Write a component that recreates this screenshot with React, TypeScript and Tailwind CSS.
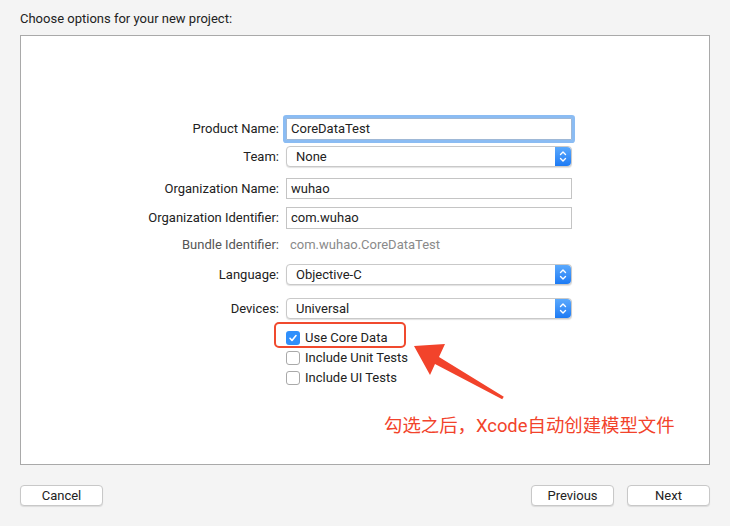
const Stepper = () => (
  <div className="absolute right-0 top-0 bottom-0 w-[16px] rounded-r-[4px] bg-gradient-to-b from-[#5aa9fd] to-[#1b7af4] flex items-center justify-center">
    <svg width="8" height="13" viewBox="0 0 8 13" fill="none" stroke="white" strokeWidth="1.4" strokeLinecap="round" strokeLinejoin="round">
      <path d="M1.5 4.5 L4 2 L6.5 4.5" />
      <path d="M1.5 8.5 L4 11 L6.5 8.5" />
    </svg>
  </div>
);

const Popup = ({ value }: { value: string }) => (
  <div className="relative w-[286px] h-full bg-white border border-[#c9c9c9] rounded-[4px] shadow-[0_1px_1px_rgba(0,0,0,0.12)] flex items-center pl-[9px] text-[13px] text-[#222]">
    {value}
    <Stepper />
  </div>
);

const Field = ({ value, focused }: { value: string; focused?: boolean }) => (
  <div
    className={
      focused
        ? "w-[286px] h-full bg-white border border-[#9fb8d6] ring-[3px] ring-[#8bbcf3] rounded-[1px] flex items-center pl-[4px] text-[13px] text-[#222]"
        : "w-[286px] h-full bg-white border border-[#c4c4c4] flex items-center pl-[4px] text-[13px] text-[#222]"
    }
  >
    {value}
  </div>
);

const Row = ({ label, className, children }: { label: string; className: string; children: React.ReactNode }) => (
  <div className={"flex items-center " + className}>
    <div className="w-[258px] text-right text-[13px] text-[#222]">{label}</div>
    <div className="ml-[7px] h-full flex items-center">{children}</div>
  </div>
);

const Check = ({ label, checked, className }: { label: string; checked?: boolean; className: string }) => (
  <div className={"flex items-center h-[20px] pl-[265px] " + className}>
    {checked ? (
      <div className="w-[14px] h-[14px] rounded-[3px] bg-[#2f8ffb] flex items-center justify-center">
        <svg width="10" height="10" viewBox="0 0 10 10" fill="none" stroke="white" strokeWidth="1.6" strokeLinecap="round" strokeLinejoin="round">
          <path d="M2 5.3 L4 7.5 L8 2.5" />
        </svg>
      </div>
    ) : (
      <div className="w-[14px] h-[14px] rounded-[3px] bg-white border border-[#a9a9a9]" />
    )}
    <span className="ml-[5px] text-[13px] text-[#222]">{label}</span>
  </div>
);

const App = () => {
  return (
    <div className="relative w-[730px] h-[526px] bg-[#f4f4f4] font-['Roboto','Noto_Sans_CJK_SC',sans-serif] overflow-hidden">
      <div className="pl-[20px] pt-[10px] h-[35px] text-[13px] text-[#222] leading-[18px]">Choose options for your new project:</div>

      <div className="mx-[20px] h-[430px] bg-white border border-[#a9a9a9] pt-[82px]">
        <Row label="Product Name:" className="h-[22px]">
          <Field value="CoreDataTest" focused />
        </Row>
        <Row label="Team:" className="h-[21px] mt-[6px]">
          <Popup value="None" />
        </Row>
        <Row label="Organization Name:" className="h-[21px] mt-[11px]">
          <Field value="wuhao" />
        </Row>
        <Row label="Organization Identifier:" className="h-[22px] mt-[8px]">
          <Field value="com.wuhao" />
        </Row>
        <div className="flex items-center h-[20px] mt-[6px] text-[13px]">
          <div className="w-[258px] text-right text-[#555]">Bundle Identifier:</div>
          <div className="ml-[11px] text-[#8a8a8a]">com.wuhao.CoreDataTest</div>
        </div>
        <Row label="Language:" className="h-[21px] mt-[9px]">
          <Popup value="Objective-C" />
        </Row>
        <Row label="Devices:" className="h-[21px] mt-[13px]">
          <Popup value="Universal" />
        </Row>
        <Check label="Use Core Data" checked className="mt-[9px]" />
        <Check label="Include Unit Tests" className="" />
        <Check label="Include UI Tests" className="" />
      </div>

      <div className="flex justify-between px-[20px] mt-[20px]">
        <button className="w-[83px] h-[21px] bg-white border border-[#c8c8c8] rounded-[4px] shadow-[0_1px_1px_rgba(0,0,0,0.1)] text-[13px] text-[#222]">Cancel</button>
        <div className="flex gap-[13px]">
          <button className="w-[83px] h-[21px] bg-white border border-[#c8c8c8] rounded-[4px] shadow-[0_1px_1px_rgba(0,0,0,0.1)] text-[13px] text-[#222]">Previous</button>
          <button className="w-[83px] h-[21px] bg-white border border-[#c8c8c8] rounded-[4px] shadow-[0_1px_1px_rgba(0,0,0,0.1)] text-[13px] text-[#222]">Next</button>
        </div>
      </div>

      {/* annotation */}
      <div className="absolute left-[274px] top-[322px] w-[132px] h-[26px] border-2 border-[#f04a2e] rounded-[5px]" />
      <svg className="absolute left-0 top-0 pointer-events-none" width="730" height="526" viewBox="0 0 730 526">
        <polygon points="414,346 445,344 439,357 503.8,396.7 502.2,399.3 435,364 430,375" fill="#f2432b" />
      </svg>
      <div className="absolute left-[384px] top-[414px] text-[18.4px] leading-[24px] text-[#f2432b]">勾选之后，Xcode自动创建模型文件</div>
    </div>
  );
};

export default App;
